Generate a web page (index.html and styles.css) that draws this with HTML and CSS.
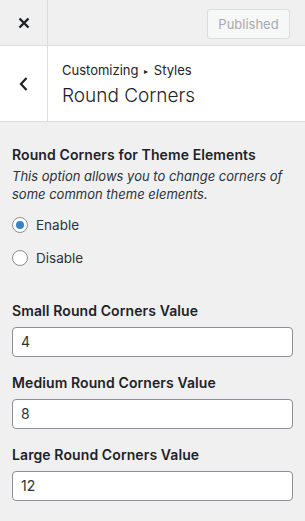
FILE: index.html
```html
<!DOCTYPE html>
<html lang="en">

<head>
    <meta charset="UTF-8">
    <title>Round Corners</title>
    <link rel="stylesheet" href="styles.css">
</head>

<body>
    <div class="topbar">
        <div class="close">
            <svg width="12" height="12" viewBox="0 0 12 12">
                <path d="M1.5 1.5 L10.5 10.5 M10.5 1.5 L1.5 10.5" stroke="#1d2327" stroke-width="2.4" fill="none"/>
            </svg>
        </div>
        <div class="spacer"></div>
        <div class="publish">Published</div>
    </div>

    <div class="section-head">
        <div class="back">
            <svg width="10" height="14" viewBox="0 0 10 14">
                <path d="M7.5 1 L2 7 L7.5 13" stroke="#1d2327" stroke-width="2.2" fill="none"/>
            </svg>
        </div>
        <div class="title">
            <div class="crumb">Customizing <span class="sep">&#9656;</span> Styles</div>
            <div class="name">Round Corners</div>
        </div>
    </div>

    <div class="content">
        <div class="control">
            <div class="label">Round Corners for Theme Elements</div>
            <div class="desc">This option allows you to change corners of some common theme elements.</div>
            <div class="radios">
                <label class="radio"><span class="dot checked"></span>Enable</label>
                <label class="radio"><span class="dot"></span>Disable</label>
            </div>
        </div>

        <div class="field first">
            <div class="label">Small Round Corners Value</div>
            <div class="input">4</div>
        </div>
        <div class="field">
            <div class="label">Medium Round Corners Value</div>
            <div class="input">8</div>
        </div>
        <div class="field">
            <div class="label">Large Round Corners Value</div>
            <div class="input">12</div>
        </div>
    </div>
</body>

</html>
```

FILE: styles.css
```css
html,
body {
    margin: 0;
    padding: 0;
}

body {
    background: #f0f0f1;
    color: #1d2327;
    font-family: "Inter", "Liberation Sans", sans-serif;
    width: 305px;
}

.topbar {
    display: flex;
    align-items: flex-start;
    height: 45px;
    border-bottom: 1px solid #dcdcde;
}

.close {
    width: 47px;
    height: 45px;
    border-right: 1px solid #dcdcde;
    display: flex;
    align-items: center;
    justify-content: center;
}

.spacer {
    flex: 1;
}

.publish {
    width: 81px;
    height: 28px;
    margin: 9px 15px 0 0;
    border: 1px solid #dcdcde;
    border-radius: 3px;
    background: #f6f7f7;
    color: #a7aaad;
    font-size: 13px;
    line-height: 29px;
    text-align: center;
}

.section-head {
    display: flex;
    background: #fff;
    border-bottom: 1px solid #dcdcde;
}

.back {
    width: 47px;
    border-right: 1px solid #dcdcde;
    display: flex;
    align-items: center;
    justify-content: center;
}

.title {
    padding: 15px 0 11px 14px;
}

.crumb {
    font-size: 13px;
    line-height: 18px;
    color: #1d2327;
}

.crumb .sep {
    font-size: 8px;
    margin: 0 2px;
    vertical-align: 1px;
}

.name {
    margin-top: 2px;
    font-size: 19px;
    font-weight: 300;
    line-height: 28px;
    color: #1d2327;
}

.content {
    padding: 23px 12px 0 12px;
}

.label {
    font-size: 14px;
    font-weight: 600;
    letter-spacing: 0.1px;
    line-height: 20px;
    color: #1d2327;
}

.desc {
    margin-top: 2px;
    font-size: 13px;
    font-style: italic;
    line-height: 18px;
    color: #2c3338;
}

.radios {
    margin-top: 10px;
}

.radio {
    display: flex;
    align-items: center;
    height: 24px;
    margin-bottom: 9px;
    font-size: 13.5px;
    color: #2c3338;
}

.dot {
    box-sizing: border-box;
    width: 16px;
    height: 16px;
    margin-right: 8px;
    border: 1px solid #8c8f94;
    border-radius: 50%;
    background: #fff;
    display: flex;
    align-items: center;
    justify-content: center;
}

.dot.checked::after {
    content: "";
    width: 8px;
    height: 8px;
    border-radius: 50%;
    background: #3582c4;
}

.field {
    margin-top: 16px;
}

.field.first {
    margin-top: 31px;
}

.field .label {
    margin-bottom: 6px;
}

.input {
    box-sizing: border-box;
    height: 30px;
    padding: 0 8px;
    border: 1px solid #8c8f94;
    border-radius: 4px;
    background: #fff;
    font-size: 14px;
    line-height: 28px;
    color: #2c3338;
}
```
